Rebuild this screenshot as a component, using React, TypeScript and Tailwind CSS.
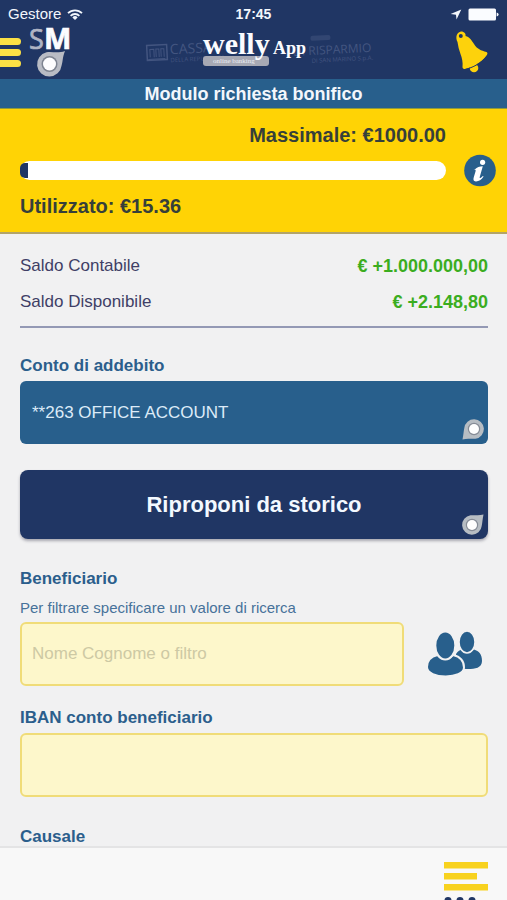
import React from "react";

function WifiIcon() {
  return (
    <svg width="16" height="13" viewBox="0 0 16 13" fill="none" stroke="#f3f7fc" strokeWidth="1.8" aria-hidden="true">
      <path d="M1 5.2a10 10 0 0 1 14 0" />
      <path d="M3.6 7.8a6.3 6.3 0 0 1 8.8 0" />
      <path d="M8 12 5.4 9.4a3.7 3.7 0 0 1 5.2 0Z" fill="#f3f7fc" stroke="none" />
    </svg>
  );
}

function LocationIcon() {
  return (
    <svg width="12" height="11" viewBox="0 0 12 11" fill="#f3f7fc" aria-hidden="true">
      <path d="M11.3.5 6.5 10.5 6 5.8.6 4.9Z" />
    </svg>
  );
}

function BatteryIcon() {
  return (
    <svg width="31" height="13" viewBox="0 0 31 13" fill="#fafcff" aria-hidden="true">
      <rect x="0.5" y="0.5" width="27.5" height="12" rx="1.5" />
      <path d="M28.6 4.5q2 .4 2 2t-2 2Z" />
    </svg>
  );
}

function BankLogo() {
  return (
    <svg width="44" height="51" viewBox="0 0 44 51" className="overflow-visible" role="img" aria-label="SM">
      <text x="0" y="21" fontFamily="Open Sans, sans-serif" fontSize="27" fill="#aeb4c4" stroke="#aeb4c4" strokeWidth="0.700">S</text>
      <text x="15" y="21" fontFamily="Open Sans, sans-serif" fontWeight="700" fontSize="29" fill="#fbfcff" stroke="#fbfcff" strokeWidth="0.700">M</text>
      <path d="M36 23C33.500 29 34 33 32.600 37.500A12.300 12.300 0 1 1 17.500 24.200C24 23.500 29 25.500 36 23Z" fill="#b9bcc4" />
      <circle cx="20.500" cy="36" r="8" fill="#7f8591" />
      <circle cx="20.500" cy="36" r="6.500" fill="#fdfdfe" />
    </svg>
  );
}

function WellyLogo() {
  return (
    <svg width="241" height="51" viewBox="0 0 241 51" className="overflow-visible" role="img" aria-label="welly App">
      <g transform="rotate(-3 120 22)" fill="#435580" fontFamily="Open Sans, sans-serif">
        <g fill="none" stroke="#435580">
          <rect x="14" y="12" width="20" height="15" strokeWidth="1.500" />
          <path d="M17 24v-8h4v8M23 24v-8h3v8M28 24v-8h3v8M15 26h17" />
        </g>
        <text x="37" y="22" fontSize="14">CASSA</text>
        <text x="37" y="30" fontSize="6">DELLA REPUBBLICA</text>
        <text x="160" y="30" fontSize="12">DI RISPARMIO</text>
        <text x="178" y="38" fontSize="6">DI SAN MARINO S.p.A.</text>
        <rect x="178" y="11" width="20" height="5" rx="2" opacity="0.500" />
      </g>
      <rect x="70" y="28" width="66" height="10" rx="3" fill="#a7a9b4" />
      <text x="80" y="35" fontFamily="Liberation Serif, serif" fontSize="7" fill="#eceef4">online banking</text>
      <text x="70" y="26" fontFamily="Liberation Serif, serif" fontWeight="700" fontSize="30" fill="#fbfcff">welly</text>
      <text x="140" y="26" fontFamily="Liberation Serif, serif" fontWeight="700" fontSize="18" fill="#fbfcff">App</text>
    </svg>
  );
}

function BellIcon() {
  return (
    <svg width="34" height="44" viewBox="0 0 34 44" aria-hidden="true">
      <circle cx="19" cy="38" r="4.300" fill="#fdd20c" />
      <path
        d="M2.500 12C0 7 2 2 6 1.500C9.500 1.500 11 4 10.500 6C15 7 17 11 19 14C22 19 26 20.500 31.500 22C33 23 32.500 24 31.500 25.500C26 33 18 37 10 39C8.500 39 7.500 38.500 7.500 37C8 32 7 28 5.500 24C4 20 3 16 2.500 12Z"
        fill="#fdd20c"
      />
      <path d="M10 39.500C18 37.500 26 33.500 32 26" fill="none" stroke="#203664" strokeWidth="1" />
      <circle cx="5.800" cy="6" r="2" fill="#203664" />
    </svg>
  );
}

function InfoIcon() {
  return (
    <svg width="32" height="33" viewBox="0 0 32 33" aria-hidden="true">
      <circle cx="16" cy="16.500" r="15.800" fill="#285f8c" />
      <circle cx="18.600" cy="8.300" r="2.600" fill="#fff" />
      <path
        d="M11 15.300c2-2 4.500-3.100 7.800-3.100l-3 10.500c-.5 1.900.6 1.800 3-.8l.8.700c-2.300 3.500-5 5-7.800 4.900-2.400-.2-2.700-1.800-2.100-3.900l1.800-6.200c.5-1.900-.2-2.100-1.900-1.300Z"
        fill="#fff"
      />
    </svg>
  );
}

function PinMark({ flipped = false }: { flipped?: boolean }) {
  return (
    <svg width="22" height="21" viewBox="0 0 22 21" className={flipped ? "rotate-180" : ""} aria-hidden="true">
      <path d="M21.500.500C20.500 5 20.500 8 19.700 12A9.800 9.800 0 1 1 8.500 1.300C13 .8 17 1.800 21.500.500Z" fill="#b7bdc3" />
      <circle cx="10" cy="11" r="6.200" fill="#868c96" />
      <circle cx="10" cy="11" r="5" fill="#fefefe" />
    </svg>
  );
}

function PeopleIcon() {
  return (
    <svg width="56" height="47" viewBox="0 0 56 47" aria-hidden="true">
      <g fill="#285f8c" stroke="#f1f1f2">
        <path d="M28 23C30 20 32 19 34 18.600C37 22 43 22 46 18.600C51 20 54 23.500 54 30C54 37 47 38 40 38C34 38 28 36 28 31Z" stroke="none" />
        <ellipse cx="39" cy="11" rx="8" ry="11" strokeWidth="1.500" />
        <path d="M-1 36C-1 29 3 25.500 9.500 24C13 29 21 29 25 24C31.500 25.500 36 29 36 36.500C36 48.500-1 48.500-1 36Z" strokeWidth="2" />
        <ellipse cx="17.300" cy="14.500" rx="10" ry="14" strokeWidth="2" />
      </g>
    </svg>
  );
}

function ListIcon() {
  return (
    <svg width="44" height="44" viewBox="0 0 44 44" aria-hidden="true">
      <path d="M0 0h44v6.500H0zM0 11h33v6.500H0zM0 22h44v6.500H0z" fill="#f8d21e" />
      <g fill="#203664">
        <circle cx="4" cy="38.500" r="3.500" />
        <circle cx="16" cy="38.500" r="3.500" />
        <circle cx="28" cy="38.500" r="3.500" />
      </g>
    </svg>
  );
}

function BalanceRow({ label, amount }: { label: string; amount: string }) {
  return (
    <div className="flex h-9 items-center justify-between">
      <dt className="text-[17px] text-[#403f66]">{label}</dt>
      <dd className="text-[18px] leading-6 font-bold text-[#3bad1f]">{amount}</dd>
    </div>
  );
}

const labelClass = "block text-[17px] leading-6 font-bold text-[#2b5e8c]";
const fieldClass =
  "block h-16 w-full rounded-md border-2 border-[#f0dc78] bg-[#fdf7cb] px-2.5 text-[17px] text-[#403f66] placeholder:text-[#cdc9a4] placeholder:opacity-100 outline-none";

export default function App() {
  const limit = 1000;
  const used = 15.36;

  return (
    <div className="flex h-screen flex-col overflow-hidden bg-[#f1f1f2] font-['Liberation_Sans',Arial,sans-serif]">
      <header className="shrink-0 bg-[#203664] text-[#f3f7fc]">
        <div className="grid h-7 grid-cols-3 items-center px-2 text-[15px]">
          <div className="flex items-center gap-1.5">
            <span>Gestore</span>
            <WifiIcon />
          </div>
          <time className="text-center text-[14px] font-bold">17:45</time>
          <div className="flex items-center justify-end gap-1.5">
            <LocationIcon />
            <BatteryIcon />
          </div>
        </div>
        <div className="grid grid-cols-[1fr_auto_1fr]">
          <div className="flex gap-2">
            <button type="button" aria-label="Menu" className="flex flex-col gap-1 pt-2.5">
              <span className="h-[7px] w-[21px] rounded-r-full bg-[#fbe045]" />
              <span className="h-[7px] w-[21px] rounded-r-full bg-[#fbe045]" />
              <span className="h-[7px] w-[21px] rounded-r-full bg-[#fbe045]" />
            </button>
            <BankLogo />
          </div>
          <WellyLogo />
          <div className="flex items-start justify-end pt-0.5 pr-[18px]">
            <button type="button" aria-label="Notifiche">
              <BellIcon />
            </button>
          </div>
        </div>
        <h1 className="h-[30px] border-b border-[#8f9a3c] bg-[#285f8c] text-center text-[18px] leading-[30px] font-bold">
          Modulo richiesta bonifico
        </h1>
      </header>

      <section className="flex shrink-0 items-center gap-[18px] border-b-2 border-[#b3a468] bg-[#ffd305] py-3 pr-[11px] pl-5 text-[20px] font-bold text-[#363f3a]">
        <div className="flex-1">
          <p className="text-right leading-7">Massimale: €1000.00</p>
          <div className="my-3 flex h-[19px] items-center rounded-full bg-white">
            <div
              className="h-[15px] min-w-2 rounded-l-[5px] bg-[#203664]"
              style={{ width: `${(used / limit) * 100}%` }}
            />
          </div>
          <p className="leading-7">Utilizzato: €15.36</p>
        </div>
        <button type="button" aria-label="Informazioni">
          <InfoIcon />
        </button>
      </section>

      <main className="min-h-0 flex-1 overflow-hidden pr-[19px] pl-5">
        <dl className="border-b-2 border-[#9499b5] pt-3.5 pb-1.5">
          <BalanceRow label="Saldo Contabile" amount="€ +1.000.000,00" />
          <BalanceRow label="Saldo Disponibile" amount="€ +2.148,80" />
        </dl>

        <form>
          <label htmlFor="account" className={`mt-[26px] mb-[3px] ${labelClass}`}>
            Conto di addebito
          </label>
          <div className="relative">
            <select
              id="account"
              className="block h-[63px] w-full appearance-none rounded-md bg-[#285f8c] px-3 text-[17px] text-[#dcebf8] outline-none"
            >
              <option>**263 OFFICE ACCOUNT</option>
            </select>
            <span className="pointer-events-none absolute right-1 bottom-1">
              <PinMark flipped />
            </span>
          </div>

          <button
            type="button"
            className="relative mt-[26px] block h-[69px] w-full rounded-lg bg-[#203664] text-[22px] font-bold text-[#f3f9ff] shadow-[0_2px_3px_rgba(60,60,80,0.4)]"
          >
            Riproponi da storico
            <span className="absolute right-1 bottom-1">
              <PinMark />
            </span>
          </button>

          <label htmlFor="payee" className={`mt-7 mb-[7px] ${labelClass}`}>
            Beneficiario
          </label>
          <p id="payee-hint" className="mb-1 text-[15px] leading-5 text-[#47729a]">
            Per filtrare specificare un valore di ricerca
          </p>
          <div className="flex items-center gap-6 pr-1">
            <input
              id="payee"
              aria-describedby="payee-hint"
              type="text"
              placeholder="Nome Cognome o filtro"
              className={fieldClass}
            />
            <button type="button" aria-label="Rubrica" className="shrink-0">
              <PeopleIcon />
            </button>
          </div>

          <label htmlFor="iban" className={`mt-5 mb-[3px] ${labelClass}`}>
            IBAN conto beneficiario
          </label>
          <input id="iban" type="text" className={fieldClass} />

          <label htmlFor="reason" className={`mt-7 mb-[3px] ${labelClass}`}>
            Causale
          </label>
          <input id="reason" type="text" className={fieldClass} />
        </form>
      </main>

      <footer className="flex h-[54px] shrink-0 items-start justify-end overflow-hidden border-t-2 border-[#e4e4e5] bg-[#f8f8f8] pt-3.5 pr-[19px]">
        <button type="button" aria-label="Operazioni">
          <ListIcon />
        </button>
      </footer>
    </div>
  );
}
